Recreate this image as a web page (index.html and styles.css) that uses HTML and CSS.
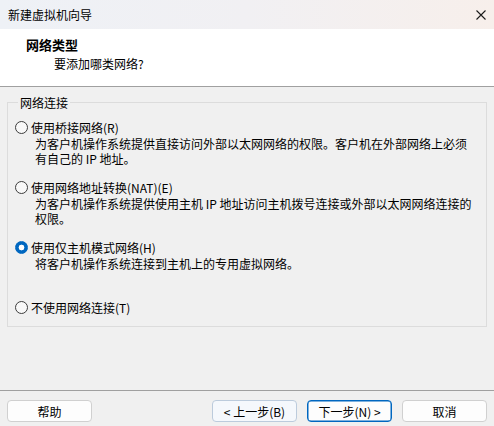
FILE: index.html
```html
<!DOCTYPE html>
<html lang="zh-CN">
<head>
<meta charset="utf-8">
<title>新建虚拟机向导</title>
<link rel="stylesheet" href="styles.css">
</head>
<body>
<div class="window">
  <div class="titlebar">
    <span class="title">新建虚拟机向导</span>
    <svg class="close" width="10" height="10" viewBox="0 0 10 10"><path d="M0.5 0.5 L9.5 9.5 M9.5 0.5 L0.5 9.5" stroke="#1a1a1a" stroke-width="1.1" fill="none"/></svg>
  </div>
  <div class="header">
    <div class="h-title">网络类型</div>
    <div class="h-sub">要添加哪类网络?</div>
  </div>
  <div class="main">
    <fieldset class="group">
      <legend class="legend">网络连接</legend>
      <div class="opt">
        <div class="opt-label"><span class="radio"></span>使用桥接网络(R)</div>
        <div class="desc">为客户机操作系统提供直接访问外部以太网网络的权限。客户机在外部网络上必须有自己的 IP 地址。</div>
      </div>
      <div class="opt">
        <div class="opt-label"><span class="radio"></span>使用网络地址转换(NAT)(E)</div>
        <div class="desc">为客户机操作系统提供使用主机 IP 地址访问主机拨号连接或外部以太网网络连接的权限。</div>
      </div>
      <div class="opt">
        <div class="opt-label"><span class="radio checked"></span>使用仅主机模式网络(H)</div>
        <div class="desc">将客户机操作系统连接到主机上的专用虚拟网络。</div>
      </div>
      <div class="opt last">
        <div class="opt-label"><span class="radio"></span>不使用网络连接(T)</div>
      </div>
    </fieldset>
  </div>
  <div class="footer">
    <button class="btn">帮助</button>
    <div class="spacer"></div>
    <button class="btn back">&lt; 上一步(B)</button>
    <button class="btn default">下一步(N) &gt;</button>
    <button class="btn">取消</button>
  </div>
</div>
</body>
</html>
```

FILE: styles.css
```css
* { box-sizing: border-box; }
html, body { margin: 0; padding: 0; }
body {
  width: 494px;
  height: 426px;
  overflow: hidden;
  font-family: "Noto Sans CJK SC", "Noto Sans", sans-serif;
  font-size: 12px;
  color: #000;
  background: #f0f0f0;
}
.window {
  display: flex;
  flex-direction: column;
  height: 426px;
}
.titlebar {
  height: 29px;
  flex: none;
  display: flex;
  align-items: center;
  justify-content: space-between;
  padding: 0 8px 0 8px;
  background: linear-gradient(90deg, #eef1f6 0%, #f1f0f3 50%, #f7efeb 100%);
  line-height: 15px;
}
.close { margin-right: 0; }
.header {
  height: 58px;
  flex: none;
  background: #fff;
  border-bottom: 1px solid #a0a0a0;
  padding: 8px 0 0 26px;
}
.h-title {
  font-weight: bold;
  font-size: 13px;
  line-height: 16px;
}
.h-sub {
  margin-top: 3px;
  padding-left: 28px;
  line-height: 15px;
}
.main {
  flex: 1;
  padding: 8px 7px 0 7px;
  border-bottom: 1px solid #a0a0a0;
}
.group {
  margin: 0;
  padding: 10px 0 11px 7px;
  border: 1px solid #dcdcdc;
  min-width: 0;
}
.legend {
  padding: 0 2px;
  margin-left: 3px;
  line-height: 15px;
}
.opt {
  height: 60px;
}
.opt.last { height: 15px; }
.opt-label {
  display: flex;
  align-items: center;
  line-height: 15px;
}
.radio {
  width: 13px;
  height: 13px;
  border: 1px solid #3c3c3c;
  border-radius: 50%;
  background: #f8f8f8;
  margin-right: 3px;
  flex: none;
}
.radio.checked {
  border-color: #0067c0;
  background: radial-gradient(circle, #fff 0 2.6px, #0067c0 3.2px);
}
.desc {
  margin-top: 1px;
  padding-left: 20px;
  width: 462px;
  line-height: 15px;
}
.footer {
  flex: none;
  display: flex;
  align-items: flex-start;
  gap: 10px;
  padding: 9px 7px 0 7px;
  height: 35px;
}
.spacer { flex: 1; }
.btn {
  width: 85px;
  height: 22px;
  font-family: inherit;
  font-size: 12px;
  line-height: 15px;
  color: #000;
  background: #fdfdfd;
  border: 1px solid #d0d0d0;
  border-radius: 4px;
  padding: 0;
}
.btn.back {
  background: #f5f8fc;
  border-color: #bccbdc;
}
.btn.default {
  border: 1px solid #0067c0;
  box-shadow: inset 0 0 0 0.5px #0067c0;
}
.footer .btn:first-child { margin-right: 0; }
```
